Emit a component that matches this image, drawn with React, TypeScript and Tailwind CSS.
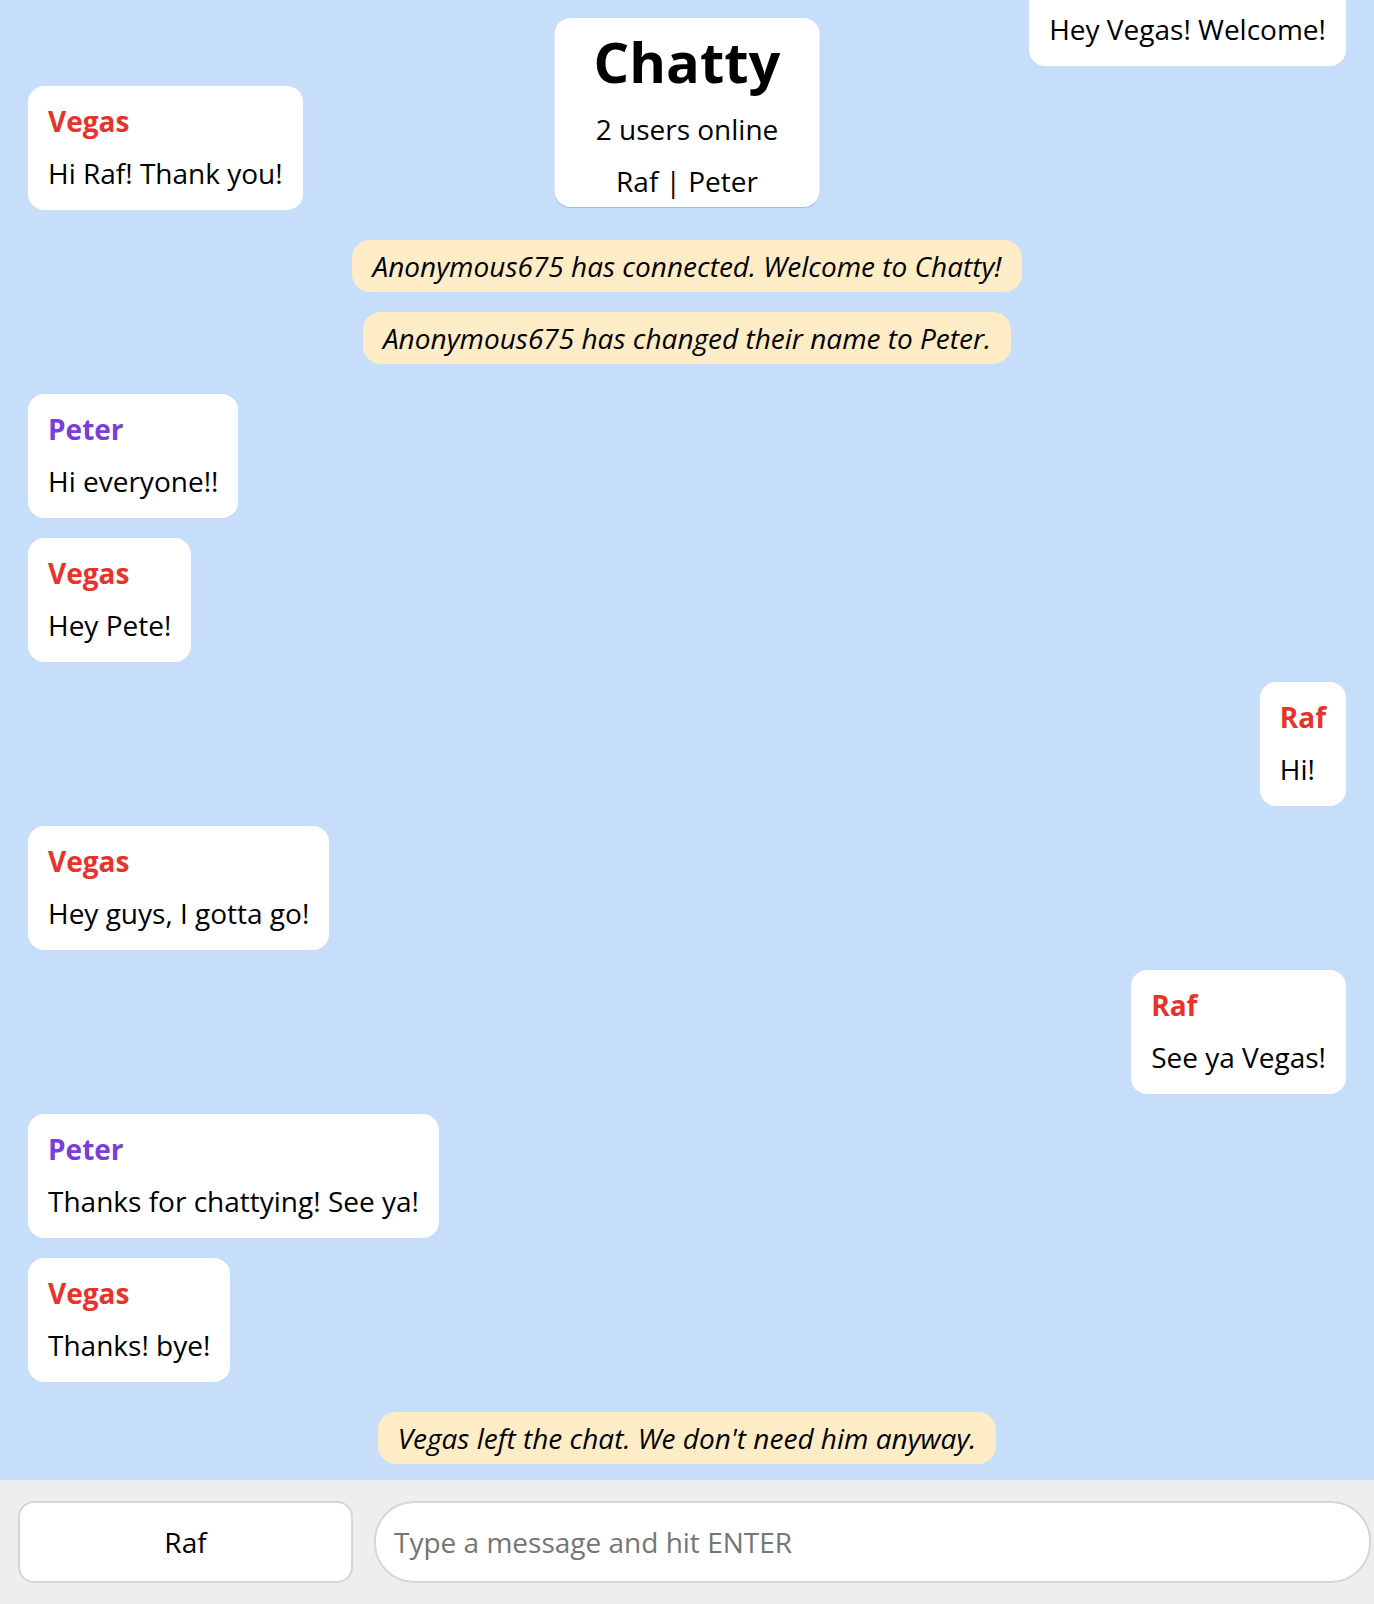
import React from "react";

type Item =
  | { kind: "msg"; side: "left" | "right"; name: string; color: string; text: string; mt: string }
  | { kind: "sys"; text: string; mt: string };

const RED = "text-[#e8332a]";
const PURPLE = "text-[#7a3fd8]";

const items: Item[] = [
  { kind: "msg", side: "right", name: "Raf", color: RED, text: "Hey Vegas! Welcome!", mt: "mt-0" },
  { kind: "msg", side: "left", name: "Vegas", color: RED, text: "Hi Raf! Thank you!", mt: "mt-[20px]" },
  { kind: "sys", text: "Anonymous675 has connected. Welcome to Chatty!", mt: "mt-[30px]" },
  { kind: "sys", text: "Anonymous675 has changed their name to Peter.", mt: "mt-[20px]" },
  { kind: "msg", side: "left", name: "Peter", color: PURPLE, text: "Hi everyone!!", mt: "mt-[30px]" },
  { kind: "msg", side: "left", name: "Vegas", color: RED, text: "Hey Pete!", mt: "mt-[20px]" },
  { kind: "msg", side: "right", name: "Raf", color: RED, text: "Hi!", mt: "mt-[20px]" },
  { kind: "msg", side: "left", name: "Vegas", color: RED, text: "Hey guys, I gotta go!", mt: "mt-[20px]" },
  { kind: "msg", side: "right", name: "Raf", color: RED, text: "See ya Vegas!", mt: "mt-[20px]" },
  { kind: "msg", side: "left", name: "Peter", color: PURPLE, text: "Thanks for chattying! See ya!", mt: "mt-[20px]" },
  { kind: "msg", side: "left", name: "Vegas", color: RED, text: "Thanks! bye!", mt: "mt-[20px]" },
  { kind: "sys", text: "Vegas left the chat. We don't need him anyway.", mt: "mt-[30px]" },
];

function Message({ item }: { item: Extract<Item, { kind: "msg" }> }) {
  return (
    <div
      className={`${item.mt} ${item.side === "left" ? "self-start" : "self-end"} bg-white rounded-[16px] px-[20px] pt-[16px] pb-[18px] flex flex-col gap-[14px]`}
    >
      <div className={`font-bold leading-[38px] whitespace-nowrap ${item.color}`}>{item.name}</div>
      <div className="leading-[38px] whitespace-nowrap text-black">{item.text}</div>
    </div>
  );
}

function System({ item }: { item: Extract<Item, { kind: "sys" }> }) {
  return (
    <div
      className={`${item.mt} self-center bg-[#fdecc6] rounded-[18px] px-[20px] py-[7px] italic leading-[38px] whitespace-nowrap text-black`}
    >
      {item.text}
    </div>
  );
}

export default function App() {
  return (
    <div
      className="relative w-full h-[1604px] bg-[#c6defa] text-[28px] text-black flex flex-col overflow-hidden"
      style={{ fontFamily: '"Open Sans", "Noto Sans", sans-serif' }}
    >
      <div className="h-[1480px] overflow-hidden px-[28px]">
        <div className="-mt-[58px] flex flex-col">
          {items.map((it, i) =>
            it.kind === "msg" ? <Message key={i} item={it} /> : <System key={i} item={it} />
          )}
        </div>
      </div>

      <div className="absolute top-[18px] left-1/2 -translate-x-1/2 w-[265px] bg-white rounded-[16px] shadow-[0_2px_1px_-1px_rgba(0,0,0,0.18)] text-center pt-[15px] pb-[7px] flex flex-col">
        <div className="text-[56px] font-bold leading-[56px]">Chatty</div>
        <div className="mt-[21px] leading-[38px]">2 users online</div>
        <div className="mt-[14px] leading-[38px]">Raf | Peter</div>
      </div>

      <div className="h-[124px] bg-[#eeeeee] flex items-start pt-[21px] pl-[18px] gap-[21px]">
        <input
          defaultValue="Raf"
          className="w-[335px] h-[82px] shrink-0 bg-white border-2 border-[#d6d6d6] rounded-[16px] text-center text-[28px] text-black outline-none"
          style={{ fontFamily: '"Open Sans", "Noto Sans", sans-serif' }}
        />
        <input
          placeholder="Type a message and hit ENTER"
          className="w-[997px] h-[82px] shrink-0 bg-white border-2 border-[#d6d6d6] rounded-[40px] pl-[18px] text-[28px] text-black placeholder:text-[#757575] outline-none"
          style={{ fontFamily: '"Open Sans", "Noto Sans", sans-serif' }}
        />
      </div>
    </div>
  );
}
